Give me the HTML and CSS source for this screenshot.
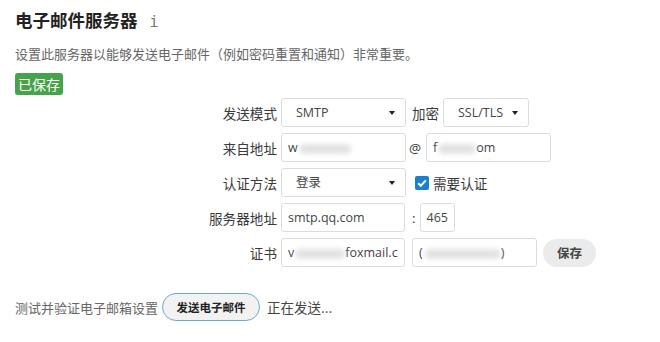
FILE: index.html
```html
<!DOCTYPE html>
<html lang="zh-CN">
<head>
    <meta charset="UTF-8">
    <title>电子邮件服务器</title>
    <link rel="stylesheet" href="styles.css">
</head>
<body>
    <div class="page">
        <!-- Header -->
        <h1 class="title">电子邮件服务器 <span class="info">i</span></h1>
        <p class="desc">设置此服务器以能够发送电子邮件（例如密码重置和通知）非常重要。</p>
        <span class="badge">已保存</span>

        <!-- Mail server form -->
        <div class="form">
            <div class="row">
                <span class="lbl">发送模式</span>
                <div class="field select w125">SMTP</div>
                <span class="sep sep-enc">加密</span>
                <div class="field select w86">SSL/TLS</div>
            </div>
            <div class="row">
                <span class="lbl">来自地址</span>
                <div class="field w125">w<span class="blur b52"></span></div>
                <span class="sep sep-at">@</span>
                <div class="field w125">f<span class="blur b38"></span>om</div>
            </div>
            <div class="row">
                <span class="lbl">认证方法</span>
                <div class="field select w125">登录</div>
                <span class="check">
                    <svg viewBox="0 0 14 14" width="14" height="14"><path d="M3.2 7.2l2.6 2.6 5-5.4" fill="none" stroke="#fff" stroke-width="2"/></svg>
                </span>
                <span class="check-text">需要认证</span>
            </div>
            <div class="row">
                <span class="lbl">服务器地址</span>
                <div class="field w124">smtp.qq.com</div>
                <span class="sep sep-colon">:</span>
                <div class="field w35">465</div>
            </div>
            <div class="row">
                <span class="lbl">证书</span>
                <div class="field w124">v<span class="blur b50"></span>foxmail.c</div>
                <div class="field w125 gap7">(<span class="blur b76"></span>)</div>
                <button class="btn-save">保存</button>
            </div>
        </div>

        <!-- Test section -->
        <div class="test">
            <span class="test-text">测试并验证电子邮箱设置</span>
            <button class="btn-send">发送电子邮件</button>
            <span class="status">正在发送...</span>
        </div>
    </div>
</body>
</html>
```

FILE: styles.css
```css
:root {
    --color-text: #3a3a3a;
    --color-muted: #666;
    --color-border: #dcdcdc;
    --color-green: #46a349;
    --color-blue: #1b7fc9;
    --font-family: "Noto Sans CJK SC", sans-serif;
    --font-latin: "Open Sans", "Noto Sans CJK SC", sans-serif;
}

* {
    box-sizing: border-box;
    margin: 0;
    padding: 0;
}

body {
    background: #fff;
    color: var(--color-text);
    font-family: var(--font-family);
}

.page {
    padding: 8px 15px 0 15px;
}

/* Header */
.title {
    font-size: 17.5px;
    font-weight: bold;
    line-height: 24px;
    color: #222;
}

.info {
    font-family: "DejaVu Sans Mono", monospace;
    font-weight: normal;
    font-size: 15px;
    color: #777;
    margin-left: 8px;
}

.desc {
    margin-top: 10px;
    font-size: 13px;
    line-height: 20px;
    color: var(--color-muted);
}

.badge {
    display: inline-block;
    margin-top: 9px;
    padding: 0 3px;
    height: 22px;
    line-height: 22px;
    font-size: 14px;
    color: #fff;
    background: var(--color-green);
    border-radius: 3px;
}

/* Form */
.form {
    margin-top: 3px;
    display: flex;
    flex-direction: column;
    gap: 6px;
    padding-left: 162px;
}

.row {
    display: flex;
    align-items: center;
    height: 29px;
}

.lbl {
    width: 100px;
    margin-right: 4px;
    text-align: right;
    font-size: 13.6px;
    color: var(--color-text);
}

.field {
    position: relative;
    height: 29px;
    line-height: 27px;
    padding-left: 6px;
    border: 1px solid var(--color-border);
    border-radius: 3px;
    background: #fff;
    font-family: var(--font-latin);
    font-size: 12.5px;
    color: #444;
    white-space: nowrap;
}

.select {
    padding-left: 14px;
}

.select::after {
    content: "";
    position: absolute;
    right: 10px;
    top: 12px;
    border-left: 3.5px solid transparent;
    border-right: 3.5px solid transparent;
    border-top: 4px solid #222;
}

.w124 { width: 124px; }
.w125 { width: 125px; }
.w86 { width: 86px; }
.w35 { width: 35px; }
.gap7 { margin-left: 7px; }

/* Redacted text smudges */
.blur {
    display: inline-block;
    height: 10px;
    vertical-align: middle;
    background: #e2e2e2;
    border-radius: 5px;
    filter: blur(2.5px);
}

.b52 { width: 52px; margin-left: 1px; }
.b38 { width: 38px; margin-left: 1px; }
.b50 { width: 50px; margin-left: 1px; }
.b76 { width: 76px; margin-left: 2px; }

.sep {
    font-size: 13.5px;
    color: var(--color-text);
}

.sep-enc { margin: 0 4px 0 6px; }
.sep-at { margin: 0 5px 0 3px; font-family: var(--font-latin); }
.sep-colon { margin: 0 4px 0 7px; font-family: var(--font-latin); }

.check {
    display: inline-flex;
    width: 14px;
    height: 14px;
    margin-left: 9px;
    background: var(--color-blue);
    border-radius: 2px;
}

.check-text {
    margin-left: 4px;
    font-size: 13.6px;
    color: var(--color-text);
}

.btn-save {
    margin-left: 6px;
    width: 53px;
    height: 28px;
    border: none;
    border-radius: 14px;
    background: #ebebeb;
    font-family: var(--font-family);
    font-size: 12.5px;
    font-weight: bold;
    color: #444;
}

/* Test section */
.test {
    margin-top: 26px;
    display: flex;
    align-items: center;
    height: 28px;
}

.test-text {
    font-size: 13px;
    color: var(--color-muted);
}

.btn-send {
    margin-left: 4px;
    width: 98px;
    height: 28px;
    border: 1px solid #6aaad6;
    border-radius: 14px;
    background: #f2f2f2;
    font-family: var(--font-family);
    font-size: 11.5px;
    font-weight: bold;
    color: #222;
}

.status {
    margin-left: 7px;
    font-size: 13.5px;
    color: #444;
}
```
